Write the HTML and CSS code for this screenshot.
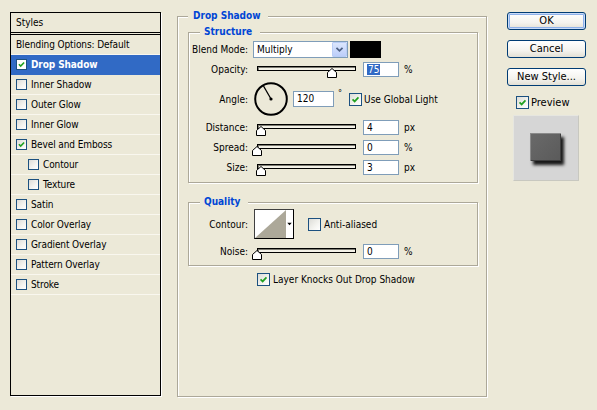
FILE: index.html
```html
<!DOCTYPE html>
<html>
<head>
<meta charset="utf-8">
<link rel="stylesheet" href="styles.css">
</head>
<body>
<div class="dialog">
  <div class="styles-panel">
    <div class="panel-head">Styles</div>
    <div class="item">Blending Options: Default</div>
    <div class="item selected"><span class="cb small"><svg viewBox="0 0 11 11"><path d="M2.3 5.2 L4.5 7.4 L8.7 3" /></svg></span><b>Drop Shadow</b></div>
    <div class="item"><span class="cb small"></span>Inner Shadow</div>
    <div class="item"><span class="cb small"></span>Outer Glow</div>
    <div class="item"><span class="cb small"></span>Inner Glow</div>
    <div class="item"><span class="cb small"><svg viewBox="0 0 11 11"><path d="M2.3 5.2 L4.5 7.4 L8.7 3" /></svg></span>Bevel and Emboss</div>
    <div class="item indent"><span class="cb small"></span>Contour</div>
    <div class="item indent"><span class="cb small"></span>Texture</div>
    <div class="item"><span class="cb small"></span>Satin</div>
    <div class="item"><span class="cb small"></span>Color Overlay</div>
    <div class="item"><span class="cb small"></span>Gradient Overlay</div>
    <div class="item"><span class="cb small"></span>Pattern Overlay</div>
    <div class="item"><span class="cb small"></span>Stroke</div>
  </div>

  <div class="group main-group">
    <div class="legend">Drop Shadow</div>

    <div class="group sub-group structure">
      <div class="legend sub-legend">Structure</div>

      <div class="row r-blend">
        <span class="label">Blend Mode:</span>
        <div class="select"><span class="select-text">Multiply</span><span class="select-btn"><svg viewBox="0 0 15 15"><path d="M4 5.5 L7.5 9 L11 5.5" /></svg></span></div>
        <span class="swatch"></span>
      </div>

      <div class="row r-slider r-opacity">
        <span class="label">Opacity:</span>
        <div class="slider"><div class="track"></div><svg class="thumb" style="left:69.8px" viewBox="0 0 10 10"><path d="M5 0.5 L9.5 4.5 L9.5 9.5 L0.5 9.5 L0.5 4.5 Z" /></svg></div>
        <span class="num"><span class="sel">75</span></span><span class="unit">%</span>
      </div>

      <div class="row r-angle">
        <span class="label">Angle:</span>
        <svg class="dial" viewBox="0 0 34 34"><circle cx="17" cy="17" r="15.8" /><line x1="17" y1="17" x2="9.5" y2="4" /><circle class="dot" cx="17" cy="17" r="1.6" /></svg>
        <span class="num angle-num">120</span>
        <span class="deg">°</span>
        <span class="cb"><svg viewBox="0 0 13 13"><path d="M3 6.3 L5.5 8.8 L10 4" /></svg></span>
        <span class="cb-text">Use Global Light</span>
      </div>

      <div class="row r-slider r-distance">
        <span class="label">Distance:</span>
        <div class="slider"><div class="track"></div><svg class="thumb" style="left:-1.5px" viewBox="0 0 10 10"><path d="M5 0.5 L9.5 4.5 L9.5 9.5 L0.5 9.5 L0.5 4.5 Z" /></svg></div>
        <span class="num">4</span><span class="unit">px</span>
      </div>

      <div class="row r-slider r-spread">
        <span class="label">Spread:</span>
        <div class="slider"><div class="track"></div><svg class="thumb" style="left:-5px" viewBox="0 0 10 10"><path d="M5 0.5 L9.5 4.5 L9.5 9.5 L0.5 9.5 L0.5 4.5 Z" /></svg></div>
        <span class="num">0</span><span class="unit">%</span>
      </div>

      <div class="row r-slider r-size">
        <span class="label">Size:</span>
        <div class="slider"><div class="track"></div><svg class="thumb" style="left:-1.5px" viewBox="0 0 10 10"><path d="M5 0.5 L9.5 4.5 L9.5 9.5 L0.5 9.5 L0.5 4.5 Z" /></svg></div>
        <span class="num">3</span><span class="unit">px</span>
      </div>
    </div>

    <div class="group sub-group quality">
      <div class="legend sub-legend">Quality</div>

      <div class="row r-contour">
        <span class="label">Contour:</span>
        <div class="contour">
          <svg class="curve" viewBox="0 0 31 28"><rect x="0" y="0" width="31" height="28" fill="#fff" /><path d="M0 28 L31 0 L31 28 Z" fill="#aca899" /></svg>
          <span class="contour-btn"><svg viewBox="0 0 8 28"><path d="M1.5 12.5 L6.5 12.5 L4 15.5 Z" /></svg></span>
        </div>
        <span class="cb empty"></span>
        <span class="cb-text">Anti-aliased</span>
      </div>

      <div class="row r-slider r-noise">
        <span class="label">Noise:</span>
        <div class="slider"><div class="track"></div><svg class="thumb" style="left:-5px" viewBox="0 0 10 10"><path d="M5 0.5 L9.5 4.5 L9.5 9.5 L0.5 9.5 L0.5 4.5 Z" /></svg></div>
        <span class="num">0</span><span class="unit">%</span>
      </div>
    </div>

    <div class="row r-knock">
      <span class="cb"><svg viewBox="0 0 13 13"><path d="M3 6.3 L5.5 8.8 L10 4" /></svg></span>
      <span class="cb-text">Layer Knocks Out Drop Shadow</span>
    </div>
  </div>

  <div class="side">
    <div class="btn default">OK</div>
    <div class="btn">Cancel</div>
    <div class="btn">New Style...</div>
    <div class="row r-preview">
      <span class="cb"><svg viewBox="0 0 13 13"><path d="M3 6.3 L5.5 8.8 L10 4" /></svg></span>
      <span class="cb-text">Preview</span>
    </div>
    <div class="preview"><div class="preview-square"></div></div>
  </div>
</div>
</body>
</html>
```

FILE: styles.css
```css
html, body {
  margin: 0;
  padding: 0;
}

body {
  width: 597px;
  height: 410px;
  overflow: hidden;
  background: #ece9d8;
  color: #000;
  font-family: "DejaVu Sans Condensed", "DejaVu Sans", sans-serif;
  font-stretch: condensed;
  font-size: 10px;
}

.dialog {
  display: flex;
  align-items: flex-start;
  padding: 12px 0 0 10px;
}

/* ---------- left styles list ---------- */
.styles-panel {
  width: 149px;
  height: 382px;
  border: 1px solid #000;
  box-shadow: 1px 1px 0 #fff;
  flex: none;
}

.panel-head {
  height: 19px;
  line-height: 19px;
  padding-left: 5px;
  border-bottom: 3px double #000;
}

.item {
  height: 19px;
  border-bottom: 1px solid #f9f7ef;
  padding-left: 5px;
  display: flex;
  align-items: center;
  white-space: nowrap;
  letter-spacing: -0.1px;
}

.item.selected {
  background: #316ac5;
  color: #fff;
  border-bottom-color: #316ac5;
}

.item.selected b {
  font-weight: bold;
}

.item.indent {
  padding-left: 17px;
}

/* ---------- checkboxes ---------- */
.cb {
  flex: none;
  width: 13px;
  height: 13px;
  box-sizing: border-box;
  border: 1px solid #1c5180;
  background: linear-gradient(135deg, #dcdcd7 0%, #f4f4f0 60%, #fff 100%);
  display: flex;
}

.cb.small {
  width: 11px;
  height: 11px;
  margin-right: 4px;
}

.cb svg {
  width: 100%;
  height: 100%;
}

.cb svg path {
  fill: none;
  stroke: #21a121;
  stroke-width: 2;
}

.item.selected .cb {
  background: #fff;
}

.cb-text {
  margin-left: 3px;
  white-space: nowrap;
}

/* ---------- group boxes ---------- */
.group {
  border: 1px solid #aca899;
  box-shadow: inset 1px 1px 0 #fff, 1px 1px 0 #fff;
}

.main-group {
  flex: none;
  width: 298px;
  height: 379px;
  margin: 4px 0 0 16px;
  padding: 0 0 0 10px;
}

.legend {
  display: table;
  height: 14px;
  line-height: 14px;
  margin-top: -8px;
  padding: 0 7px 0 5px;
  background: #ece9d8;
  color: #0046d5;
  font-weight: bold;
  white-space: nowrap;
}

.sub-group {
  width: 288px;
}

.sub-legend {
  margin-left: 11px;
  padding: 0 8px 0 4px;
}

.structure {
  margin-top: 9px;
  padding-bottom: 7px;
}

.quality {
  margin-top: 19px;
  padding-bottom: 6px;
}

/* ---------- rows ---------- */
.row {
  display: flex;
  align-items: center;
  white-space: nowrap;
}

.label {
  flex: none;
  width: 59px;
  margin-right: 5px;
  text-align: right;
}

.r-blend {
  margin-top: 2px;
  height: 17px;
}

.r-slider {
  height: 15px;
}

.r-opacity {
  margin-top: 4px;
}

.r-angle {
  margin-top: 5px;
  height: 34px;
}

.r-distance {
  margin-top: 4px;
}

.r-spread,
.r-size {
  margin-top: 5px;
}

.r-contour {
  height: 30px;
}

.r-noise {
  margin-top: 5px;
}

/* select */
.select {
  flex: none;
  width: 95px;
  height: 17px;
  box-sizing: border-box;
  border: 1px solid #7f9db9;
  background: #fff;
  display: flex;
  align-items: center;
  justify-content: space-between;
}

.select-text {
  padding-left: 3px;
}

.select-btn {
  width: 15px;
  height: 15px;
  box-sizing: border-box;
  border: 1px solid #b9cdf6;
  border-radius: 1px;
  background: linear-gradient(#dbe6fd, #bccefa);
  display: flex;
}

.select-btn svg {
  width: 100%;
  height: 100%;
}

.select-btn path {
  fill: none;
  stroke: #4d6185;
  stroke-width: 2;
}

.swatch {
  flex: none;
  width: 31px;
  height: 17px;
  margin-left: 2px;
  background: #000;
}

/* slider */
.slider {
  flex: none;
  position: relative;
  width: 99px;
  height: 15px;
  margin: 0 7px 0 4px;
  align-self: flex-start;
}

.track {
  margin-top: 4px;
  height: 5px;
  box-sizing: border-box;
  border: 1px solid #000;
  background: #f3f1e7;
  box-shadow: inset 1px 1px 0 #7c7b72;
}

.thumb {
  position: absolute;
  top: 6px;
  width: 10px;
  height: 10px;
}

.thumb path {
  fill: #fff;
  stroke: #000;
  stroke-width: 1;
}

/* numeric fields */
.num {
  flex: none;
  width: 36px;
  height: 15px;
  box-sizing: border-box;
  border: 1px solid #7f9db9;
  background: #fff;
  padding-left: 3px;
  line-height: 13px;
}

.sel {
  background: #316ac5;
  color: #fff;
  padding: 0 1px;
}

.unit {
  margin-left: 5px;
}

/* angle */
.dial {
  flex: none;
  width: 34px;
  height: 34px;
  margin-left: 1px;
}

.dial circle {
  fill: none;
  stroke: #000;
  stroke-width: 2;
}

.dial line {
  stroke: #000;
  stroke-width: 1.3;
}

.dial .dot {
  fill: #000;
  stroke: none;
}

.angle-num {
  width: 41px;
  height: 16px;
  line-height: 14px;
  margin-left: 5px;
}

.deg {
  align-self: flex-start;
  margin: 6px 0 0 4px;
  font-size: 9px;
}

.r-angle .cb {
  margin-left: 7px;
}

.r-angle .cb-text {
  margin-left: 2px;
}

/* contour */
.contour {
  flex: none;
  width: 40px;
  height: 30px;
  margin-left: 1px;
  box-sizing: border-box;
  border: 1px solid #404040;
  border-right-color: #000;
  border-bottom-color: #000;
  background: #fff;
  display: flex;
}

.curve {
  width: 31px;
  height: 28px;
  display: block;
}

.contour-btn {
  width: 7px;
  display: flex;
}

.contour-btn svg {
  width: 100%;
  height: 100%;
}

.contour-btn path {
  fill: #000;
}

.r-contour .cb {
  margin-left: 14px;
}

/* knock out row */
.r-knock {
  margin: 7px 0 0 69px;
  height: 13px;
}

/* ---------- right side ---------- */
.side {
  flex: none;
  width: 79px;
  margin-left: 20px;
  display: flex;
  flex-direction: column;
}

.btn {
  height: 18px;
  box-sizing: border-box;
  border: 1px solid #003c74;
  border-radius: 3px;
  background: linear-gradient(#ffffff 0%, #f4f3ee 60%, #e3e0d5 100%);
  text-align: center;
  line-height: 16px;
  font-size: 11px;
  margin-bottom: 10px;
}

.btn.default {
  box-shadow: inset 0 0 0 1px #c9dbf7, inset 0 0 0 2px #8eb1ea;
}

.r-preview {
  margin-left: 9px;
  height: 13px;
  font-size: 11px;
}

.r-preview .cb-text {
  margin-left: 2px;
}

.preview {
  width: 66px;
  height: 66px;
  box-sizing: border-box;
  margin: 6px 0 0 6px;
  background: #d6d6d6;
  border: 1px solid #e6e6e0;
  border-right-color: #c8c8c0;
  border-bottom-color: #c8c8c0;
  display: flex;
  align-items: center;
  justify-content: center;
}

.preview-square {
  width: 31px;
  height: 28px;
  margin: 0 2px 3px 0;
  background: linear-gradient(135deg, #6a6a6a, #5a5a5a);
  box-shadow: inset 1px 1px 0 #8a8a8a, inset -1px -1px 0 #3e3e3e, 3px 4px 3px #1a1a1a;
}
```
